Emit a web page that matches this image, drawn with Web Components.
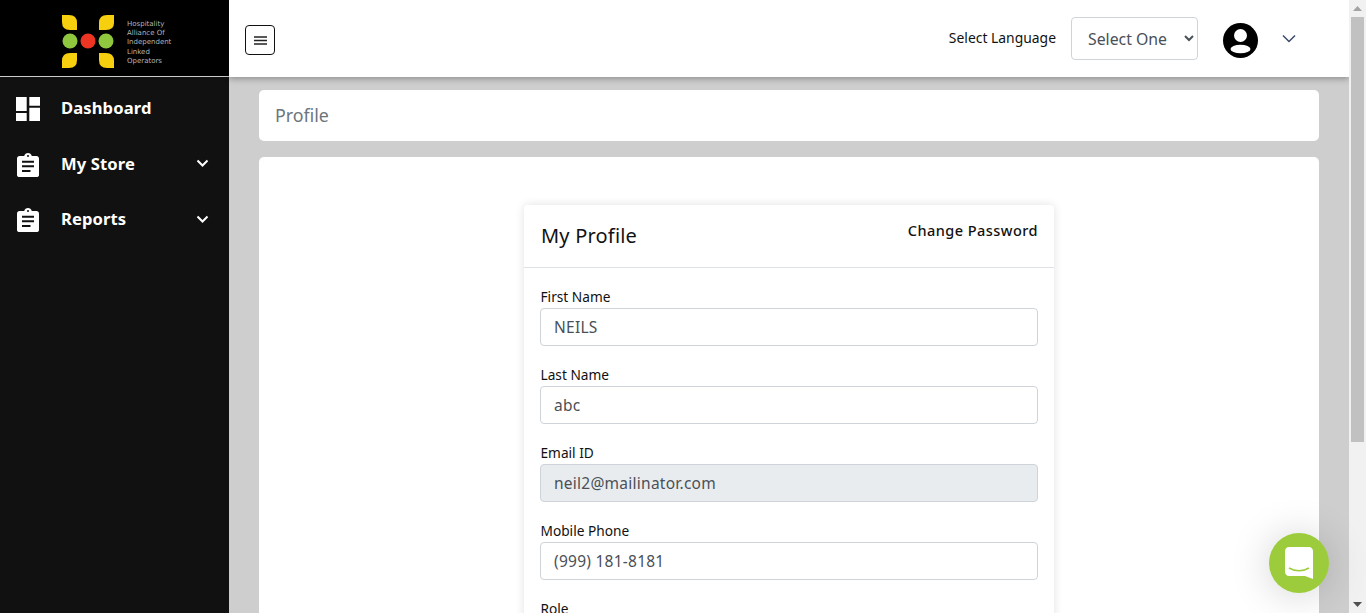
<!DOCTYPE html>
<html lang="en"><head><meta charset="utf-8"><title>Profile</title>
<style>
html,body{margin:0;height:613px;overflow:hidden;background:#cecece;font-family:"Noto Sans","Open Sans",sans-serif}
</style></head><body>
<app-shell>
  <side-nav slot="nav">
    <nav-item label="Dashboard" icon="dash"></nav-item>
    <nav-item label="My Store" icon="clip" expandable></nav-item>
    <nav-item label="Reports" icon="clip" expandable></nav-item>
  </side-nav>
  <top-bar slot="top"></top-bar>
  <panel-card slot="content" class="crumb">Profile</panel-card>
  <panel-card slot="content" class="body">
    <profile-card>
      <form-field label="First Name" value="NEILS"></form-field>
      <form-field label="Last Name" value="abc"></form-field>
      <form-field label="Email ID" value="neil2@mailinator.com" disabled></form-field>
      <form-field label="Mobile Phone" value="(999) 181-8181"></form-field>
      <form-field label="Role" value=""></form-field>
    </profile-card>
  </panel-card>
</app-shell>
<chat-launcher></chat-launcher>
<script>
function def(name, html, init){
  customElements.define(name, class extends HTMLElement{
    connectedCallback(){
      if(this.shadowRoot) return;
      const r=this.attachShadow({mode:'open'});
      r.innerHTML = typeof html==='function' ? html(this) : html;
      if(init) init(this,r);
    }
  });
}
def('app-shell',`<style>
:host{display:flex;width:1366px;height:613px;overflow:hidden}
.page{flex:1;min-width:0;display:flex;height:613px;overflow:hidden}
.nav{width:229px;flex:none}
.main{flex:1;min-width:0;display:flex;flex-direction:column;background:#cecece}
.content{padding:13px 30px 0;display:flex;flex-direction:column;gap:16px}
.sb{width:17px;flex:none;background:#f1f1f1;display:flex;flex-direction:column}
.arrow{height:17px;display:flex;align-items:center;justify-content:center}
.thumb{height:425px;margin:0 2px;background:#c1c1c1}
.fill{flex:1}
</style>
<div class="page">
<div class="nav"><slot name="nav"></slot></div>
<div class="main"><slot name="top"></slot><div class="content"><slot name="content"></slot></div></div>
</div>
<div class="sb" aria-hidden="true">
<div class="arrow"><svg width="9" height="5" viewBox="0 0 9 5"><path d="M4.500 0 9 5H0z" fill="#a3a3a3"/></svg></div>
<div class="thumb"></div><div class="fill"></div>
<div class="arrow"><svg width="9" height="5" viewBox="0 0 9 5"><path d="M0 0h9L4.500 5z" fill="#505050"/></svg></div>
</div>`);
def('side-nav',`<style>
:host{display:flex;flex-direction:column;height:613px;background:#111}
.brand{height:77px;box-sizing:border-box;background:#000;border-bottom:1px solid #ccc;display:flex;align-items:center;padding:7px 0 0 62px;gap:13px;flex:none}
svg{display:block}
.name{font:7px/9.250px "DejaVu Sans",sans-serif;color:#b4b4b4;margin-top:3px}
.items{display:flex;flex-direction:column;padding-top:3px}
</style>
<div class="brand">
<svg width="52" height="53" viewBox="0 0 52 53">
<g fill="#f6cf0f">
<path d="M0 0H7Q15 0 15 8V15H8Q0 15 0 7Z"/>
<path d="M52 0H45Q37 0 37 8V15H44Q52 15 52 8Z"/>
<path d="M15 38H8Q0 38 0 46V53H7Q15 53 15 45Z"/>
<path d="M37 38H44Q52 38 52 46V53H45Q37 53 37 45Z"/>
</g>
<circle cx="8" cy="26" r="7.500" fill="#8fc73e"/><circle cx="26" cy="26" r="7.500" fill="#ee3524"/><circle cx="44" cy="26" r="7.500" fill="#8fc73e"/>
</svg>
<div class="name">Hospitality<br>Alliance Of<br>Independent<br>Linked<br>Operators</div>
</div>
<div class="items"><slot></slot></div>`);
const icons={
 dash:`<svg width="24" height="24" viewBox="0 0 24 24" fill="#fff"><path d="M0 0h10.700v14H0zM13.300 0H24v8.700H13.300zM13.300 10.700H24V24H13.300zM0 16h10.700v8H0z"/></svg>`,
 clip:`<svg width="24" height="24" viewBox="0 0 24 24"><path fill="#fff" d="M3.500 3H8.200C8.700 1.300 10.200 0 12 0s3.300 1.300 3.800 3h4.700C21.900 3 23 4.100 23 5.500V22c0 1.400-1.100 2-2.500 2h-17C2.100 24 1 23.400 1 22V5.500C1 4.100 2.100 3 3.500 3Z"/><path fill="#111" d="M6 7.700h12v2H6zM6 12.300h12v2H6zM6 17h8.500v2H6z"/><circle cx="12" cy="3" r="1" fill="#111"/></svg>`
};
def('nav-item',el=>`<style>
:host{display:flex;align-items:center;height:55.500px;color:#fff;padding-left:16px}
.ic{width:24px;height:24px;flex:none;margin-top:3px}
.lb{margin-left:21px;font-size:16.600px;font-weight:700;flex:1;letter-spacing:.1px}
.ch{margin-right:20px;display:block}
</style>
<span class="ic">${icons[el.getAttribute('icon')]}</span>
<span class="lb">${el.getAttribute('label')}</span>
${el.hasAttribute('expandable')?`<svg class="ch" width="13" height="8" viewBox="0 0 13 8"><path d="M1.500 1.500 6.500 6.500 11.500 1.500" fill="none" stroke="#fff" stroke-width="2"/></svg>`:''}`);
def('top-bar',`<style>
:host{display:flex;align-items:center;height:77px;background:#fff;box-shadow:0 2px 6px rgba(0,0,0,.3);position:relative;flex:none;box-sizing:border-box;padding-left:16px}
button{width:30px;height:30px;margin-top:3px;box-sizing:border-box;border:1px solid #111;border-radius:4px;background:#fff;padding:0;display:flex;align-items:center;justify-content:center}
.sp{flex:1}
.lang{font-size:13.900px;color:#111;margin-right:15px;margin-top:-3px}
select{width:127px;height:43px;box-sizing:border-box;border:1px solid #ced4da;border-radius:4px;background:#fff;color:#495057;font:15.800px "Noto Sans",sans-serif;padding:0 12px;margin-right:25px}
.av{display:block;margin:4px 24px 0 0}
.chev{display:block;margin-right:53px}
</style>
<button aria-label="Menu"><svg width="13" height="9" viewBox="0 0 13 9"><path d="M0 1h13M0 4.500h13M0 8h13" stroke="#222" stroke-width="1.500"/></svg></button>
<span class="sp"></span>
<span class="lang">Select Language</span>
<select><option>Select One</option></select>
<svg class="av" width="35" height="35" viewBox="0 0 35 35"><circle cx="17.500" cy="17.500" r="17.500" fill="#000"/><circle cx="17.500" cy="12.500" r="6.500" fill="#fff"/><ellipse cx="17.500" cy="26" rx="10" ry="4.300" fill="#fff"/></svg>
<svg class="chev" width="14" height="9" viewBox="0 0 14 9"><path d="M1 1.500 7 7.500 13 1.500" fill="none" stroke="#3b4a68" stroke-width="1.500"/></svg>`);
def('panel-card',el=>el.classList.contains('crumb')?`<style>
:host{display:flex;align-items:center;height:51px;box-sizing:border-box;padding:0 0 2px 16px;background:#fff;border-radius:5px;font-size:17.800px;color:#6c757d}
</style><slot></slot>`:`<style>
:host{display:flex;justify-content:center;background:#fff;border-radius:5px 5px 0 0;padding-top:48px}
</style><slot></slot>`);
def('profile-card',`<style>
:host{display:block;width:530px;background:#fff;border-radius:4px;box-shadow:0 0 10px rgba(0,0,0,.12)}
header{height:63px;box-sizing:border-box;border-bottom:1px solid #dee2e6;padding:0 16px 0 17px;display:flex;justify-content:space-between}
h1{margin:19px 0 0;font-size:20px;font-weight:400;color:#111;line-height:24px;letter-spacing:.2px}
a{margin-top:15px;font-size:14.500px;font-weight:500;color:#111;line-height:20px;letter-spacing:.45px}
.b{padding:18px 16px 0 16px;display:flex;flex-direction:column;gap:18px}
</style>
<header><h1>My Profile</h1><a>Change Password</a></header>
<div class="b"><slot></slot></div>`);
def('form-field',el=>`<style>
:host{display:block;font-size:13.700px;color:#111}
label{display:block;line-height:22px;padding-left:.5px}
.in{height:38px;box-sizing:border-box;border:1px solid #ced4da;border-radius:4px;background:${el.hasAttribute('disabled')?'#e9ecef':'#fff'};color:#495057;font-size:15.500px;line-height:36px;padding:0 13px;letter-spacing:.25px}
</style>
<label>${el.getAttribute('label')}</label>
<div class="in">${el.getAttribute('value')}</div>`);
def('chat-launcher',`<style>
:host{position:fixed;left:1269px;top:533px;width:60px;height:60px;border-radius:50%;background:#9ccc3c;box-shadow:0 2px 40px rgba(0,0,0,.18);display:flex;align-items:center;justify-content:center}
</style>
<svg width="28" height="32" viewBox="0 0 28 32"><path fill="#fff" d="M4 0H24C26.200 0 28 1.800 28 4V32L20 29H4C1.800 29 0 27.200 0 25V4C0 1.800 1.800 0 4 0Z"/><path d="M4 21C10 24.500 18 24.500 24 21" fill="none" stroke="#9ccc3c" stroke-width="1.500"/></svg>`);
</script>
</body></html>
